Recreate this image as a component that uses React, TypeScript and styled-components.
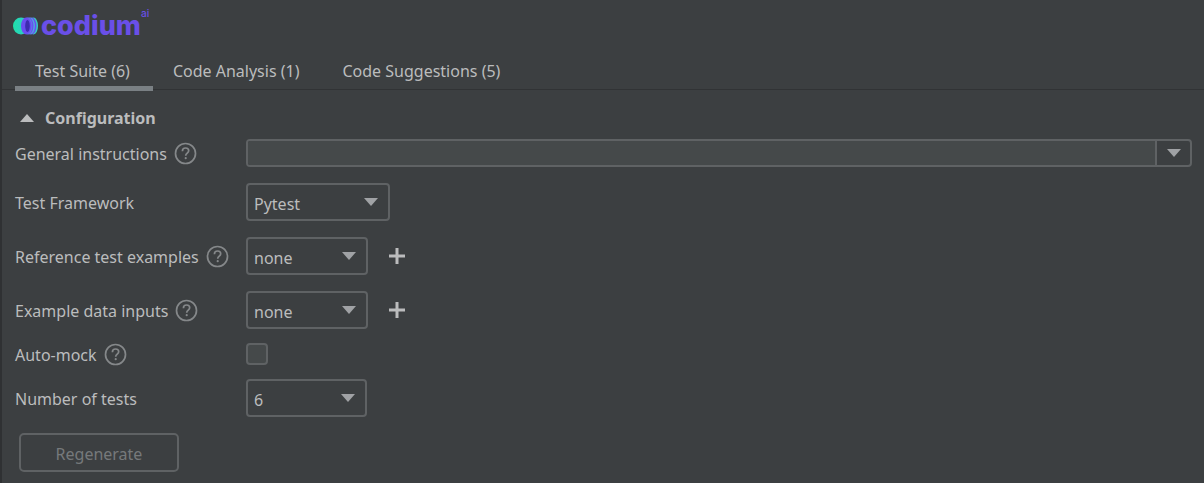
import React, { useState } from "react";
import styled, { createGlobalStyle } from "styled-components";

const color = {
  bg: "#3c3f41",
  edge: "#2f3133",
  rule: "#313335",
  text: "#bbbcbd",
  muted: "#76797b",
  border: "#5f6264",
  field: "#45494a",
  icon: "#a0a2a5",
  help: "#85888a",
  underline: "#7a8084",
};

const GlobalStyle = createGlobalStyle`
  * { box-sizing: border-box; }
  body {
    margin: 0;
    background: ${color.bg};
    color: ${color.text};
    font-family: "Noto Sans", "Open Sans", sans-serif;
    font-size: 16px;
    line-height: 22px;
  }
  button, input, select { font: inherit; color: inherit; margin: 0; }
`;

const Panel = styled.main`
  min-height: 100vh;
  border-left: 2px solid ${color.edge};
`;

const Header = styled.header`
  height: 52px;
  padding: 0 11px;
`;

const Tabs = styled.div`
  display: flex;
  height: 38px;
  padding-left: 13px;
  border-bottom: 1px solid ${color.rule};
`;

const Tab = styled.button<{ $active: boolean }>`
  height: 39px;
  padding: 3px 23px 0 20px;
  border: 0;
  border-bottom: 5px solid ${(p) => (p.$active ? color.underline : "transparent")};
  background: none;
  white-space: nowrap;
`;

const Content = styled.section`
  padding: 16px 12px 11px 13px;
`;

const SectionToggle = styled.button`
  display: flex;
  align-items: center;
  gap: 11px;
  height: 24px;
  margin-bottom: 9px;
  padding: 0 5px;
  border: 0;
  background: none;
  font-weight: 700;
`;

const Group = styled.div<{ $gap: number }>`
  display: grid;
  gap: ${(p) => p.$gap}px;
  margin-bottom: 14px;
`;

const Row = styled.div`
  display: grid;
  grid-template-columns: 231px minmax(0, 1fr);
  align-items: center;
`;

const LabelCell = styled.div`
  display: flex;
  align-items: center;
  gap: 7px;
  height: 22px;
  white-space: nowrap;
`;

const Label = styled.label`
  padding-top: 2px;
`;

const Controls = styled.div`
  display: flex;
  align-items: center;
  gap: 20px;
`;

const HelpButton = styled.button`
  display: flex;
  padding: 0;
  border: 0;
  background: none;
  color: ${color.help};
`;

const AddButton = styled.button`
  display: flex;
  padding: 0;
  border: 0;
  background: none;
  color: ${color.text};
`;

const Combo = styled.div`
  display: flex;
  flex: 1;
  height: 28px;
  border: 2px solid ${color.border};
  border-radius: 4px;
  overflow: hidden;
`;

const ComboInput = styled.input`
  flex: 1;
  min-width: 0;
  padding: 0 6px;
  border: 0;
  outline: 0;
  background: ${color.field};
`;

const ComboButton = styled.button`
  display: flex;
  align-items: center;
  justify-content: center;
  width: 35px;
  padding: 0;
  border: 0;
  border-left: 2px solid ${color.border};
  background: none;
  color: ${color.icon};
`;

const SelectBox = styled.div<{ $width: number }>`
  display: grid;
  align-items: center;
  width: ${(p) => p.$width}px;
  height: 38px;
  color: ${color.icon};

  > * { grid-area: 1 / 1; }
  > svg { justify-self: end; margin-right: 12px; pointer-events: none; }
`;

const Select = styled.select`
  appearance: none;
  width: 100%;
  height: 38px;
  padding: 3px 32px 0 6px;
  border: 2px solid ${color.border};
  border-radius: 4px;
  background: ${color.bg};
  color: ${color.text};
`;

const Checkbox = styled.input`
  appearance: none;
  width: 22px;
  height: 22px;
  border: 2px solid ${color.border};
  border-radius: 4px;
  background: ${color.field};

  &:checked { background: ${color.help}; }
`;

const Regenerate = styled.button`
  width: 160px;
  height: 39px;
  margin: 2px 0 0 4px;
  padding: 2px 0 0;
  border: 2px solid ${color.border};
  border-radius: 5px;
  background: none;
  color: ${color.muted};
`;

const Logo = () => (
  <svg width="150" height="48" viewBox="0 0 150 48" role="img" aria-label="codium ai">
    <defs>
      <linearGradient id="mint" x1="0" x2="1">
        <stop offset="0" stopColor="#1fe0a8" />
        <stop offset="1" stopColor="#35c5d0" />
      </linearGradient>
    </defs>
    <ellipse cx="8" cy="26" rx="8" ry="8.500" fill="url(#mint)" />
    <ellipse cx="20.500" cy="26" rx="4.500" ry="8.500" fill="#35cfc4" />
    <ellipse cx="18.800" cy="26" rx="4.700" ry="8.500" fill="#6a4df0" />
    <ellipse cx="17.200" cy="26" rx="4.700" ry="8.500" fill="#4fa9e0" />
    <ellipse cx="15.800" cy="26" rx="4.700" ry="8.500" fill="#6a4df0" />
    <ellipse cx="14.600" cy="26" rx="4.700" ry="8.500" fill="#5e7ee8" />
    <ellipse cx="13.200" cy="26" rx="5.200" ry="8.500" fill="#6a4df0" />
    <ellipse cx="14.500" cy="26" rx="2.300" ry="6" fill="#3d2bb0" />
    <text x="28" y="35" fill="#6a4fe8" fontFamily="Inter, sans-serif" fontWeight="800" fontSize="27">
      codium
    </text>
    <text x="128" y="17" fill="#6a4fe8" fontFamily="Inter, sans-serif" fontWeight="500" fontSize="10">
      ai
    </text>
  </svg>
);

const Triangle = ({ up = false }: { up?: boolean }) => (
  <svg width="14" height="8" viewBox="0 0 14 8" fill="currentColor" aria-hidden="true">
    <path d={up ? "M0 8 7 0l7 8z" : "M0 0h14L7 8z"} />
  </svg>
);

const Help = ({ topic }: { topic: string }) => (
  <HelpButton type="button" aria-label={`Help: ${topic}`}>
    <svg width="23" height="23" viewBox="0 0 23 23" fill="none" stroke="currentColor" strokeWidth="1.700">
      <circle cx="11.500" cy="11.500" r="10" />
      <path d="M8.400 9.200c0-2 1.300-3.200 3.200-3.200s3.100 1.100 3.100 2.800c0 2.300-3 2.500-3 5" />
      <circle cx="11.700" cy="16.200" r="1.100" fill="currentColor" stroke="none" />
    </svg>
  </HelpButton>
);

const Add = ({ label }: { label: string }) => (
  <AddButton type="button" aria-label={label}>
    <svg width="18" height="18" viewBox="0 0 18 18" stroke="currentColor" strokeWidth="3" aria-hidden="true">
      <path d="M9 1v16M1 9h16" />
    </svg>
  </AddButton>
);

interface FieldProps {
  id: string;
  label: string;
  help?: boolean;
  children: React.ReactNode;
}

const Field = ({ id, label, help, children }: FieldProps) => (
  <Row>
    <LabelCell>
      <Label htmlFor={id}>{label}</Label>
      {help && <Help topic={label} />}
    </LabelCell>
    <Controls>{children}</Controls>
  </Row>
);

const Dropdown = ({ id, width, options }: { id: string; width: number; options: string[] }) => (
  <SelectBox $width={width}>
    <Select id={id}>
      {options.map((o) => (
        <option key={o}>{o}</option>
      ))}
    </Select>
    <Triangle />
  </SelectBox>
);

const tabs = ["Test Suite (6)", "Code Analysis (1)", "Code Suggestions (5)"];

export default function App() {
  const [active, setActive] = useState(0);
  const [open, setOpen] = useState(true);

  return (
    <Panel>
      <GlobalStyle />
      <Header>
        <Logo />
      </Header>
      <Tabs role="tablist">
        {tabs.map((name, i) => (
          <Tab
            key={name}
            type="button"
            role="tab"
            aria-selected={i === active}
            $active={i === active}
            onClick={() => setActive(i)}
          >
            {name}
          </Tab>
        ))}
      </Tabs>
      <Content>
        <SectionToggle type="button" aria-expanded={open} onClick={() => setOpen(!open)}>
          <Triangle up={open} />
          Configuration
        </SectionToggle>
        {open && (
          <>
            <Group $gap={16}>
              <Field id="instructions" label="General instructions" help>
                <Combo>
                  <ComboInput id="instructions" type="text" />
                  <ComboButton type="button" aria-label="Recent instructions">
                    <Triangle />
                  </ComboButton>
                </Combo>
              </Field>
              <Field id="framework" label="Test Framework">
                <Dropdown id="framework" width={144} options={["Pytest"]} />
              </Field>
              <Field id="examples" label="Reference test examples" help>
                <Dropdown id="examples" width={122} options={["none"]} />
                <Add label="Add reference test" />
              </Field>
              <Field id="inputs" label="Example data inputs" help>
                <Dropdown id="inputs" width={122} options={["none"]} />
                <Add label="Add data input" />
              </Field>
            </Group>
            <Group $gap={14}>
              <Field id="automock" label="Auto-mock" help>
                <Checkbox id="automock" type="checkbox" />
              </Field>
              <Field id="count" label="Number of tests">
                <Dropdown id="count" width={121} options={["6"]} />
              </Field>
            </Group>
            <Regenerate type="button" disabled>
              Regenerate
            </Regenerate>
          </>
        )}
      </Content>
    </Panel>
  );
}
